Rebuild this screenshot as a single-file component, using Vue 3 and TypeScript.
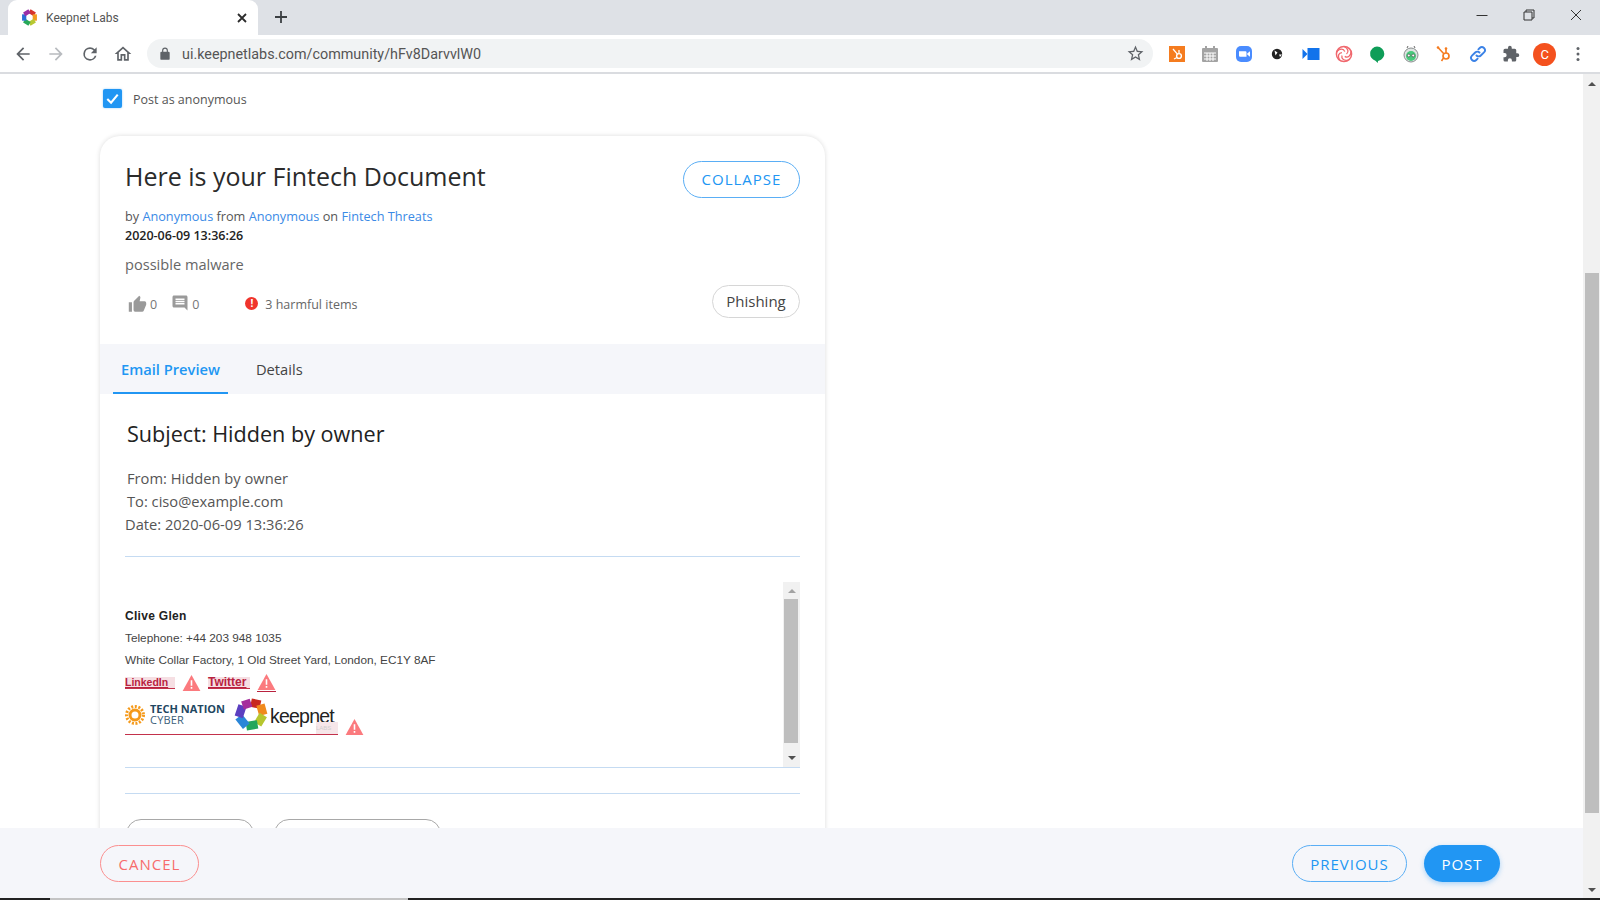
<template>
  <div class="screen">
    <!-- browser chrome -->
    <div class="tabstrip">
      <div class="tab">
        <svg class="favicon" viewBox="0 0 16 16" aria-hidden="true">
          <g fill="none" stroke-width="4">
            <path d="M8 2 L13 5" stroke="#d6342c" />
            <path d="M13 5 L13 11" stroke="#f39a1f" />
            <path d="M13 11 L8 14" stroke="#b7c832" />
            <path d="M8 14 L3 11" stroke="#27a85a" />
            <path d="M3 11 L3 5" stroke="#2a6fd6" />
            <path d="M3 5 L8 2" stroke="#9a2fa8" />
          </g>
        </svg>
        <span class="tab-title">Keepnet Labs</span>
        <svg class="tab-close" viewBox="0 0 12 12" aria-hidden="true">
          <path d="M2 2 L10 10 M10 2 L2 10" stroke="#2b2b2b" stroke-width="1.8" fill="none" />
        </svg>
      </div>
      <svg class="new-tab" viewBox="0 0 14 14" aria-hidden="true">
        <path d="M7 1 V13 M1 7 H13" stroke="#3c4043" stroke-width="1.8" fill="none" />
      </svg>
      <div class="window-controls">
        <svg viewBox="0 0 12 12" aria-hidden="true"><path d="M0.5 6.5 H11.5" stroke="#333" fill="none" /></svg>
        <svg viewBox="0 0 12 12" aria-hidden="true"><path d="M1 3 H9 V11 H1 Z M3 3 V1 H11 V9 H9" stroke="#333" fill="none" /></svg>
        <svg viewBox="0 0 12 12" aria-hidden="true"><path d="M1 1 L11 11 M11 1 L1 11" stroke="#333" fill="none" /></svg>
      </div>
    </div>

    <div class="toolbar">
      <div class="nav">
        <svg viewBox="0 0 24 24" aria-hidden="true"><path fill="#5f6368" d="M20 11H7.83l5.59-5.59L12 4l-8 8 8 8 1.41-1.41L7.83 13H20v-2z" /></svg>
        <svg viewBox="0 0 24 24" aria-hidden="true"><path fill="#b8bbbf" d="M12 4l-1.41 1.41L16.17 11H4v2h12.17l-5.58 5.59L12 20l8-8z" /></svg>
        <svg viewBox="0 0 24 24" aria-hidden="true"><path fill="#5f6368" d="M17.65 6.35A7.96 7.96 0 0 0 12 4a8 8 0 1 0 7.73 10h-2.08A6 6 0 1 1 12 6c1.66 0 3.14.69 4.22 1.78L13 11h7V4l-2.35 2.35z" /></svg>
        <svg viewBox="0 0 24 24" aria-hidden="true"><path fill="#5f6368" d="M12 5.69l5 4.5V18h-2v-6H9v6H7v-7.81l5-4.5M12 3 2 12h3v8h6v-6h2v6h6v-8h3L12 3z" /></svg>
      </div>
      <div class="omnibox">
        <svg class="lock" viewBox="0 0 24 24" aria-hidden="true"><path fill="#5f6368" d="M18 8h-1V6a5 5 0 0 0-10 0v2H6a2 2 0 0 0-2 2v10a2 2 0 0 0 2 2h12a2 2 0 0 0 2-2V10a2 2 0 0 0-2-2zM9 6a3 3 0 0 1 6 0v2H9V6z" /></svg>
        <span class="url">ui.keepnetlabs.com/community/hFv8DarvvlW0</span>
        <svg class="star" viewBox="0 0 24 24" aria-hidden="true"><path fill="#5f6368" d="M22 9.24l-7.19-.62L12 2 9.19 8.63 2 9.24l5.46 4.73L5.82 21 12 17.27 18.18 21l-1.63-7.03L22 9.24zM12 15.4l-3.76 2.27 1-4.28-3.32-2.88 4.38-.38L12 6.1l1.71 4.04 4.38.38-3.32 2.88 1 4.28L12 15.4z" /></svg>
      </div>
      <div class="extensions">
        <svg viewBox="0 0 18 18" aria-hidden="true">
          <rect x="1" y="1" width="16" height="16" fill="#f57c1f" />
          <circle cx="11" cy="11" r="2.4" fill="none" stroke="#fff" stroke-width="1.4" />
          <path d="M5 4 L9.4 9.2 M11 8 V5 M6 14 L9 12.5" stroke="#fff" stroke-width="1.3" fill="none" />
        </svg>
        <svg viewBox="0 0 18 18" aria-hidden="true">
          <rect x="1" y="3" width="16" height="14" rx="1" fill="#a3a3a3" />
          <path d="M5 1 V5 M13 1 V5" stroke="#a3a3a3" stroke-width="2" />
          <path d="M3 8 H15 M3 11 H15 M3 14 H15 M6 8 V16 M9 8 V16 M12 8 V16" stroke="#fff" stroke-width="1" />
        </svg>
        <svg viewBox="0 0 18 18" aria-hidden="true">
          <rect x="1" y="1" width="16" height="16" rx="5" fill="#4a8cff" />
          <path fill="#fff" d="M4 6.2h6.5a1 1 0 0 1 1 1v4.6H5a1 1 0 0 1-1-1zM12.2 8.5 15 6.3v5.4l-2.8-2.2z" />
        </svg>
        <svg viewBox="0 0 18 18" aria-hidden="true">
          <circle cx="9" cy="9" r="5.2" fill="#222" />
          <path d="M6.500 5.500 L9.500 7.500 L7.500 10.500 Z M11 9.500 H14 L12 12 Z" fill="#fff" />
        </svg>
        <svg viewBox="0 0 18 18" aria-hidden="true">
          <rect x="5.5" y="3" width="12" height="12" fill="#1273eb" />
          <path d="M0.5 4 L5.5 9 L0.5 14 Z" fill="#1273eb" />
        </svg>
        <svg viewBox="0 0 18 18" aria-hidden="true">
          <circle cx="9" cy="9" r="7.6" fill="none" stroke="#f0686e" stroke-width="1.5" />
          <g fill="none" stroke="#f0686e" stroke-width="1.300">
            <path d="M9 1.500 C13.500 3.500 14 7 11.500 9" />
            <path d="M9 1.500 C13.500 3.500 14 7 11.500 9" transform="rotate(72 9 9)" />
            <path d="M9 1.500 C13.500 3.500 14 7 11.500 9" transform="rotate(144 9 9)" />
            <path d="M9 1.500 C13.500 3.500 14 7 11.500 9" transform="rotate(216 9 9)" />
            <path d="M9 1.500 C13.500 3.500 14 7 11.500 9" transform="rotate(288 9 9)" />
          </g>
        </svg>
        <svg viewBox="0 0 18 18" aria-hidden="true">
          <path fill="#0f9d58" d="M9 1.5a7.3 7.3 0 0 1 7.3 7.3c0 3.6-2.6 6.3-6.3 7.2l-.2 2-2.4-2.2A7.3 7.3 0 0 1 9 1.5z" />
        </svg>
        <svg viewBox="0 0 18 18" aria-hidden="true">
          <circle cx="9" cy="10" r="7" fill="#dfe3e2" stroke="#8a8f8f" />
          <circle cx="9" cy="11" r="5" fill="#49c97c" />
          <circle cx="6.8" cy="10.5" r="1.4" fill="#fff" stroke="#333" stroke-width=".6" />
          <circle cx="11.2" cy="10.5" r="1.4" fill="#fff" stroke="#333" stroke-width=".6" />
          <path d="M5 3 L6 1 M13 3 L12 1" stroke="#666" />
        </svg>
        <svg viewBox="0 0 18 18" aria-hidden="true">
          <circle cx="11" cy="11" r="3" fill="none" stroke="#f57c1f" stroke-width="1.7" />
          <path d="M3 2.5 L8.8 8.8 M11 8 V4 M8.5 13 L6.5 16" stroke="#f57c1f" stroke-width="1.6" fill="none" />
          <circle cx="3" cy="2.5" r="1.3" fill="#f57c1f" />
          <circle cx="11" cy="3.5" r="1.3" fill="#f57c1f" />
        </svg>
        <svg viewBox="0 0 18 18" aria-hidden="true">
          <g fill="none" stroke="#3b82e6" stroke-width="1.9" stroke-linecap="round">
            <path d="M7.5 10.5a3 3 0 0 0 4.3 0l3.2-3.2a3 3 0 0 0-4.3-4.3L9.4 4.3" />
            <path d="M10.5 7.5a3 3 0 0 0-4.3 0L3 10.7A3 3 0 0 0 7.3 15l1.3-1.3" />
          </g>
        </svg>
        <svg viewBox="0 0 24 24" aria-hidden="true"><path fill="#5f6368" d="M20.5 11H19V7a2 2 0 0 0-2-2h-4V3.500a2.500 2.500 0 0 0-5 0V5H4a2 2 0 0 0-2 2v3.800h1.500a2.700 2.700 0 0 1 0 5.400H2V20a2 2 0 0 0 2 2h3.800v-1.500a2.700 2.700 0 0 1 5.400 0V22H17a2 2 0 0 0 2-2v-4h1.500a2.500 2.500 0 0 0 0-5z" /></svg>
        <span class="avatar">C</span>
        <svg viewBox="0 0 18 18" aria-hidden="true">
          <circle cx="9" cy="3.500" r="1.500" fill="#5f6368" />
          <circle cx="9" cy="9" r="1.500" fill="#5f6368" />
          <circle cx="9" cy="14.500" r="1.500" fill="#5f6368" />
        </svg>
      </div>
    </div>

    <!-- page -->
    <div class="viewport">
      <div class="page-col">
        <div class="scroll-area">
          <label class="anon">
            <span class="checkbox">
              <svg viewBox="0 0 20 20" aria-hidden="true"><path d="M4.500 10.500 L8.500 14.500 L15.500 6" stroke="#fff" stroke-width="2.200" fill="none" /></svg>
            </span>
            <span>Post as anonymous</span>
          </label>

          <section class="card">
            <div class="card-head">
              <div class="title-row">
                <h1>Here is your Fintech Document</h1>
                <button class="btn btn-outline-blue collapse">COLLAPSE</button>
              </div>
              <div class="byline">
                by <a>Anonymous</a> from <a>Anonymous</a> on <a>Fintech Threats</a>
              </div>
              <div class="stamp">2020-06-09 13:36:26</div>
              <p class="summary">possible malware</p>
              <div class="stats-row">
                <div class="stats">
                  <svg class="stat-icon like" viewBox="0 0 24 24" aria-hidden="true"><path fill="#9a9a9a" d="M1 21h4V9H1v12zm22-11a2 2 0 0 0-2-2h-6.310l.950-4.570.030-.320c0-.410-.170-.790-.440-1.060L14.170 1 7.590 7.590C7.220 7.950 7 8.450 7 9v10a2 2 0 0 0 2 2h9c.830 0 1.540-.500 1.840-1.220l3.020-7.050c.090-.230.140-.470.140-.730v-2z" /></svg>
                  <span class="count">0</span>
                  <svg class="stat-icon comment" viewBox="0 0 24 24" aria-hidden="true"><path fill="#9a9a9a" d="M21.990 4c0-1.100-.890-2-1.990-2H4c-1.100 0-2 .900-2 2v12c0 1.100.900 2 2 2h14l4 4-.010-18zM18 14H6v-2h12v2zm0-3H6V9h12v2zm0-3H6V6h12v2z" /></svg>
                  <span class="count">0</span>
                  <span class="harm-dot">!</span>
                  <span class="harm-text">3 harmful items</span>
                </div>
                <span class="chip">Phishing</span>
              </div>
            </div>

            <nav class="tabs">
              <a class="tab-link active">Email Preview</a>
              <a class="tab-link">Details</a>
            </nav>

            <div class="email">
              <h2>Subject: Hidden by owner</h2>
              <div class="headers">
                <div class="ind">From: Hidden by owner</div>
                <div class="ind">To: ciso@example.com</div>
                <div>Date: 2020-06-09 13:36:26</div>
              </div>
              <div class="rule"></div>
              <div class="frame">
                <div class="frame-body">
                  <div class="sig-name">Clive Glen</div>
                  <div class="sig-line">Telephone: +44 203 948 1035</div>
                  <div class="sig-line">White Collar Factory, 1 Old Street Yard, London, EC1Y 8AF</div>
                  <div class="sig-links">
                    <span class="flag flag-li">LinkedIn</span>
                    <svg class="warn" viewBox="0 0 20 18" aria-hidden="true"><path fill="#fb7a7e" d="M10 0 L20 18 H0 Z" /><path d="M10 6 V12 M10 13.500 V15.500" stroke="#fff" stroke-width="1.800" /></svg>
                    <span class="flag flag-tw">Twitter</span>
                    <span class="warn-under">
                      <svg class="warn" viewBox="0 0 20 18" aria-hidden="true"><path fill="#fb7a7e" d="M10 0 L20 18 H0 Z" /><path d="M10 6 V12 M10 13.500 V15.500" stroke="#fff" stroke-width="1.800" /></svg>
                    </span>
                  </div>
                  <div class="sig-logos">
                    <div class="logo-flag">
                      <svg class="sun" viewBox="0 0 20 20" aria-hidden="true">
                        <circle cx="10" cy="10" r="5" fill="none" stroke="#f59a1b" stroke-width="3" />
                        <circle cx="10" cy="10" r="8.500" fill="none" stroke="#f59a1b" stroke-width="3" stroke-dasharray="2 1.600" />
                      </svg>
                      <div class="tn">
                        <span class="tn-top">TECH NATION</span>
                        <span class="tn-bot">CYBER</span>
                      </div>
                      <svg class="hexlogo" viewBox="0 0 36 36" aria-hidden="true">
                        <g fill="none" stroke-width="9">
                          <path d="M18 6 L28 8" stroke="#c8281f" />
                          <path d="M28 8 L31 19" stroke="#f08a1d" />
                          <path d="M31 19 L25 29" stroke="#b6c62e" />
                          <path d="M25 29 L13 31" stroke="#24a65c" />
                          <path d="M13 31 L5 21" stroke="#2a86d8" />
                          <path d="M5 21 L9 9" stroke="#5b3fc0" />
                          <path d="M9 9 L18 6" stroke="#a52d9c" />
                        </g>
                      </svg>
                      <span class="kn-word">keepnet</span>
                      <span class="kn-labs">LABS</span>
                    </div>
                    <svg class="warn warn-logo" viewBox="0 0 20 18" aria-hidden="true"><path fill="#fb7a7e" d="M10 0 L20 18 H0 Z" /><path d="M10 6 V12 M10 13.500 V15.500" stroke="#fff" stroke-width="1.800" /></svg>
                  </div>
                </div>
                <div class="mini-scroll">
                  <i class="arrow up light"></i>
                  <div class="mini-thumb"></div>
                  <i class="arrow down"></i>
                </div>
              </div>
              <div class="rule rule-second"></div>
              <div class="attach-row">
                <span class="attach attach-a"></span>
                <span class="attach attach-b"></span>
              </div>
            </div>
          </section>
        </div>

        <footer class="actions">
          <button class="btn btn-outline-red">CANCEL</button>
          <div class="actions-right">
            <button class="btn btn-outline-blue previous">PREVIOUS</button>
            <button class="btn btn-solid">POST</button>
          </div>
        </footer>
      </div>

      <div class="page-scroll">
        <i class="arrow up"></i>
        <div class="page-track"><div class="page-thumb"></div></div>
        <i class="arrow down"></i>
      </div>
    </div>

    <div class="taskbar-edge"><span class="edge-light"></span></div>
  </div>
</template>

<script setup lang="ts">
</script>

<style>
html,
body {
  margin: 0;
  overflow: hidden;
}
</style>

<style scoped>
.screen {
  width: 1600px;
  height: 900px;
  display: flex;
  flex-direction: column;
  overflow: hidden;
  background: #fff;
  font-family: "Open Sans", "Noto Sans", sans-serif;
  color: #333;
}

.tabstrip {
  height: 35px;
  flex: none;
  display: flex;
  align-items: flex-end;
  padding-left: 8px;
  background: #dee1e6;
}

.tab {
  width: 250px;
  height: 35px;
  display: flex;
  align-items: center;
  box-sizing: border-box;
  padding: 0 10px 0 13px;
  background: #fff;
  border-radius: 9px 9px 0 0;
}

.favicon {
  width: 17px;
  height: 17px;
  flex: none;
}

.tab-title {
  flex: 1;
  margin-left: 8px;
  font: 12px Roboto, sans-serif;
  color: #555;
}

.tab-close {
  width: 12px;
  height: 12px;
}

.new-tab {
  width: 14px;
  height: 14px;
  margin: 0 0 11px 16px;
}

.window-controls {
  margin-left: auto;
  align-self: flex-start;
  display: flex;
  padding: 9px 18px 0 0;
  gap: 35px;
}

.window-controls svg {
  width: 12px;
  height: 12px;
}

.toolbar {
  height: 37px;
  flex: none;
  display: flex;
  align-items: center;
  background: #fff;
  border-bottom: 2px solid #dadce0;
}

.nav {
  display: flex;
  gap: 13.400px;
  padding-left: 13px;
  width: 147px;
  box-sizing: border-box;
}

.nav svg {
  width: 20px;
  height: 20px;
}

.omnibox {
  width: 1006px;
  height: 29px;
  display: flex;
  align-items: center;
  box-sizing: border-box;
  padding: 0 8px 0 11px;
  border-radius: 15px;
  background: #f1f3f4;
  font: 14.350px/29px Roboto, sans-serif;
  color: #555;
}

.lock {
  width: 14px;
  height: 14px;
  margin-right: 10px;
}

.url {
  flex: 1;
  padding-top: 2px;
  white-space: nowrap;
}

.star {
  width: 19px;
  height: 19px;
}

.extensions {
  display: flex;
  align-items: center;
  gap: 15.400px;
  margin-left: 15px;
}

.extensions > svg,
.avatar {
  width: 18px;
  height: 18px;
  flex: none;
}

.avatar {
  width: 23px;
  height: 23px;
  margin: 0 -3px -1px -2px;
  border-radius: 50%;
  background: #f4511e;
  color: #fff;
  font: 13px/23px Roboto, sans-serif;
  text-align: center;
}

.viewport {
  flex: 1;
  min-height: 0;
  display: flex;
}

.page-col {
  flex: 1;
  min-width: 0;
  display: flex;
  flex-direction: column;
}

.scroll-area {
  flex: 1;
  min-height: 0;
  overflow: hidden;
  padding-left: 100px;
}

.anon {
  display: flex;
  align-items: center;
  gap: 11px;
  margin: 14px 0 0 3px;
  height: 21px;
  font-size: 12.500px;
  color: #555;
}

.anon span:last-child {
  padding-top: 2px;
}

.checkbox {
  width: 19px;
  height: 19px;
  border-radius: 2px;
  background: #2196f3;
  box-shadow: 0 0 2px rgba(33, 150, 243, 0.5);
}

.checkbox svg {
  display: block;
  width: 19px;
  height: 19px;
}

.card {
  width: 725px;
  margin-top: 27px;
  border-radius: 20px 20px 0 0;
  background: #fff;
  box-shadow: 0 0 5px rgba(0, 0, 0, 0.14);
}

.card-head {
  height: 208px;
  box-sizing: border-box;
  padding: 25px 25px 0;
}

.title-row {
  display: flex;
  justify-content: space-between;
  align-items: flex-start;
  height: 37px;
}

h1 {
  margin: -3px 0 0;
  font-size: 25px;
  line-height: 36px;
  font-weight: 400;
  color: #2b2b2b;
}

.btn {
  height: 37px;
  box-sizing: border-box;
  border-radius: 19px;
  background: transparent;
  font-family: "Open Sans", sans-serif;
  font-size: 15px;
  letter-spacing: 1px;
  padding: 0;
  cursor: pointer;
}

.btn-outline-blue {
  border: 1px solid #5aaef5;
  color: #2196f3;
}

.collapse {
  width: 117px;
  padding-bottom: 2px;
}

.byline {
  margin-top: 9px;
  font-size: 12.700px;
  line-height: 19px;
  color: #555;
}

.byline a {
  color: #3a8ae6;
}

.stamp {
  font-size: 12.500px;
  line-height: 19px;
  font-weight: 600;
  color: #222;
}

.summary {
  margin: 8px 0 0;
  font-size: 14.600px;
  line-height: 22px;
  color: #666;
}

.stats-row {
  display: flex;
  justify-content: space-between;
  align-items: center;
  margin-top: 10px;
  height: 33px;
}

.stats {
  display: flex;
  align-items: center;
  padding-top: 5px;
  font-size: 12.500px;
  color: #777;
}

.stat-icon {
  width: 19px;
  height: 19px;
  flex: none;
}

.like {
  margin-left: 3px;
}

.comment {
  margin-left: 14px;
  width: 18px;
  height: 18px;
  margin-top: -3px;
}

.count {
  margin-left: 3px;
}

.harm-dot {
  width: 13px;
  height: 13px;
  margin-left: 46px;
  border-radius: 50%;
  background: #f0342c;
  color: #fff;
  font-size: 10px;
  line-height: 13px;
  font-weight: 700;
  text-align: center;
  margin-top: -1px;
}

.harm-text {
  margin-left: 7px;
  font-size: 12.500px;
  color: #666;
}

.chip {
  width: 88px;
  height: 33px;
  box-sizing: border-box;
  border: 1px solid #d6d6d6;
  border-radius: 17px;
  font-size: 15px;
  line-height: 31px;
  text-align: center;
  color: #444;
}

.tabs {
  height: 50px;
  display: flex;
  padding-left: 13px;
  background: #f5f6fa;
}

.tab-link {
  height: 50px;
  box-sizing: border-box;
  padding: 0 8px;
  margin-right: 20px;
  font-size: 14.700px;
  line-height: 50px;
  color: #444;
}

.tab-link.active {
  color: #2196f3;
  font-weight: 600;
  border-bottom: 2px solid #2196f3;
}

.email {
  padding: 0 25px;
}

h2 {
  margin: 25px 0 0 2px;
  font-size: 21.600px;
  line-height: 30px;
  font-weight: 500;
  color: #222;
}

.headers {
  margin-top: 18px;
  font-size: 14.700px;
  line-height: 23px;
  color: #555;
}

.ind {
  padding-left: 2px;
}

.rule {
  height: 1px;
  margin-top: 20px;
  background: #c5dbf2;
}

.frame {
  display: flex;
  margin-top: 25px;
  height: 186px;
  box-sizing: border-box;
  border-bottom: 1px solid #c5dbf2;
}

.frame-body {
  flex: 1;
  padding-top: 25px;
  font-family: "Liberation Sans", Arial, sans-serif;
  font-size: 11px;
  color: #444;
}

.sig-name {
  font-size: 12px;
  line-height: 18px;
  font-weight: 700;
  letter-spacing: 0.300px;
  color: #222;
}

.sig-line {
  margin-top: 4px;
  line-height: 18px;
  font-size: 11.800px;
}

.sig-links {
  display: flex;
  align-items: center;
  height: 21px;
  margin-top: 3px;
  font-size: 10.500px;
  font-weight: 700;
  color: #b9223f;
}

.flag {
  height: 11px;
  line-height: 11px;
  background: #f6dfe3;
  border-bottom: 1px solid #c3314b;
  text-decoration: underline;
}

.flag-li {
  width: 50px;
}

.flag-tw {
  width: 42px;
  margin-left: 7px;
  font-size: 12px;
}

.warn {
  display: block;
  width: 19px;
  height: 16px;
  flex: none;
}

.flag-li + .warn {
  margin-left: 7px;
}

.warn-under {
  margin-left: 7px;
  border-bottom: 1px solid #b9223f;
  padding-bottom: 1px;
}

.sig-logos {
  display: flex;
  align-items: flex-end;
}

.logo-flag {
  position: relative;
  width: 213px;
  height: 41px;
  display: flex;
  align-items: center;
  border-bottom: 1px solid #c3314b;
}

.sun {
  width: 20px;
  height: 20px;
  flex: none;
  margin-top: 2px;
}

.tn {
  display: flex;
  flex-direction: column;
  margin-left: 5px;
  font-family: "Open Sans", sans-serif;
  font-weight: 700;
  font-size: 11px;
  line-height: 11px;
  white-space: nowrap;
  color: #1f4761;
}

.tn-bot {
  font-weight: 400;
  letter-spacing: 0.200px;
  color: #3c5f7a;
}

.hexlogo {
  width: 34px;
  height: 34px;
  flex: none;
  margin: 1px 0 0 9px;
}

.kn-word {
  margin: 5px 0 0 2px;
  font: 19.500px/24px "Liberation Sans", Arial, sans-serif;
  letter-spacing: -0.800px;
  color: #222;
}

.kn-labs {
  position: absolute;
  right: 0;
  bottom: 0;
  width: 22px;
  height: 12px;
  background: #f6e6e9;
  font-size: 6px;
  line-height: 12px;
  color: #cfcfcf;
}

.warn-logo {
  margin-left: 7px;
}

.mini-scroll {
  width: 17px;
  flex: none;
  display: flex;
  flex-direction: column;
  align-items: center;
  background: #f1f1f1;
  height: 185px;
}

.mini-thumb {
  width: 14px;
  height: 144px;
  margin-right: 1px;
  background: #bebebe;
}

.arrow {
  display: block;
  flex: none;
  width: 0;
  height: 0;
  border-left: 4px solid transparent;
  border-right: 4px solid transparent;
}

.arrow.up {
  border-bottom: 4px solid #505050;
}

.arrow.up.light {
  border-bottom-color: #a3a3a3;
}

.arrow.down {
  border-top: 4px solid #505050;
}

.mini-scroll .arrow.up {
  margin: 7px 0 6px;
}

.mini-scroll .arrow.down {
  margin-top: 13px;
}

.rule-second {
  margin-top: 25px;
}

.attach-row {
  display: flex;
  gap: 20px;
  margin: 25px 0 0 1px;
}

.attach {
  height: 30px;
  box-sizing: border-box;
  border: 1px solid #a8a8a8;
  border-radius: 20px;
}

.attach-a {
  width: 128px;
}

.attach-b {
  width: 167px;
}

.actions {
  height: 70px;
  flex: none;
  display: flex;
  justify-content: space-between;
  align-items: flex-start;
  box-sizing: border-box;
  padding: 17px 83px 0 100px;
  background: #f5f6fa;
}

.btn-outline-red {
  width: 99px;
  border: 1px solid #fb8f8f;
  color: #f76c6c;
}

.actions-right {
  display: flex;
  gap: 17px;
}

.previous {
  width: 115px;
}

.btn-solid {
  width: 76px;
  border: 0;
  background: #2196f3;
  color: #fff;
  box-shadow: 0 2px 5px rgba(33, 150, 243, 0.35);
}

.page-scroll {
  width: 17px;
  flex: none;
  display: flex;
  flex-direction: column;
  align-items: center;
  background: #f1f1f1;
}

.page-scroll .arrow.up {
  margin: 8px 0 5px;
}

.page-scroll .arrow.down {
  margin: 5px 0 6px;
}

.page-track {
  flex: 1;
  width: 100%;
  display: flex;
  justify-content: center;
  align-items: flex-end;
  padding-bottom: 70px;
  box-sizing: border-box;
}

.page-thumb {
  width: 14px;
  height: 540px;
  background: #bebebe;
}

.taskbar-edge {
  height: 2px;
  flex: none;
  background: #222;
}

.edge-light {
  display: block;
  width: 358px;
  height: 2px;
  margin-left: 50px;
  background: #c4c4c4;
}
</style>
